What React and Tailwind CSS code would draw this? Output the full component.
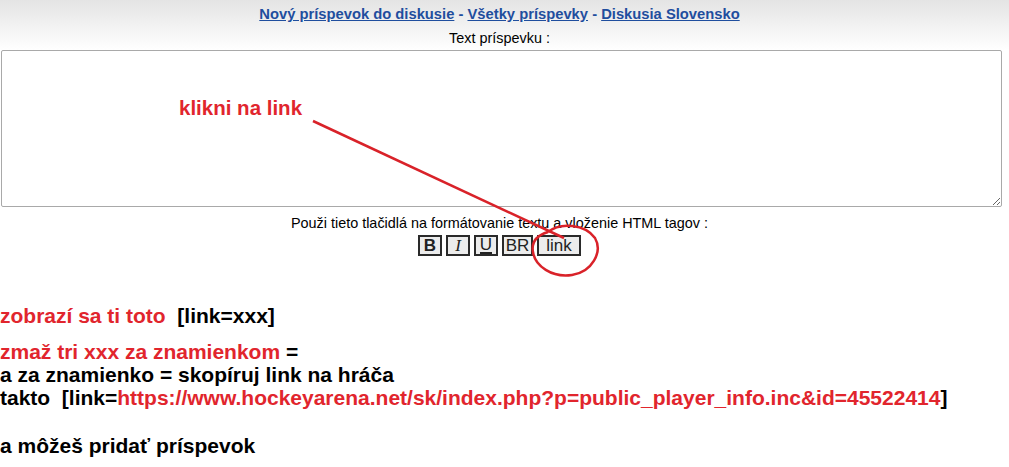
import React from 'react';

const red = 'text-[#e1252d]';

const ToolButton = ({ children, className = '' }) => (
  <span
    className={`inline-flex items-center justify-center h-[21px] border-2 border-[#2a2a2a] bg-[#ececec] text-[17px] leading-none text-[#222] ${className}`}
  >
    {children}
  </span>
);

const App = () => {
  return (
    <div className="relative w-[1009px] h-[467px] overflow-hidden bg-white font-['Liberation_Sans',Arial,sans-serif]">
      {/* Header */}
      <div className="bg-gradient-to-b from-[#e4e4e4] to-white pt-[6px] h-[50px]">
        <div className="w-[999px] text-center text-[14.75px] font-bold text-[#1f4e9e] leading-[16px]">
          <a className="underline" href="#">Nový príspevok do diskusie</a>
          <span> - </span>
          <a className="underline" href="#">Všetky príspevky</a>
          <span> - </span>
          <a className="underline" href="#">Diskusia Slovensko</a>
        </div>
        <div className="w-[999px] text-center text-[14.4px] text-black leading-[16px] mt-[8px]">Text príspevku :</div>
      </div>

      {/* Textarea */}
      <div className="pl-[1px]">
        <textarea
          className="block w-[1001px] h-[157px] border border-[#a9a9a9] rounded-[2px] bg-white outline-none"
          defaultValue=""
        />
      </div>

      {/* Toolbar */}
      <div className="w-[999px] text-center text-[14.4px] text-black leading-[16px] mt-[8px]">
        Použi tieto tlačidlá na formátovanie textu a vloženie HTML tagov :
      </div>
      <div className="w-[999px] flex justify-center gap-[4px] mt-[4px]">
        <ToolButton className="w-[24px] font-bold">B</ToolButton>
        <ToolButton className="w-[24px] italic font-['Liberation_Serif',serif]">I</ToolButton>
        <ToolButton className="w-[24px]"><span className="border-b-2 border-[#222] leading-[14px]">U</span></ToolButton>
        <ToolButton className="w-[31px]">BR</ToolButton>
        <ToolButton className="w-[44px]">link</ToolButton>
      </div>

      {/* Instructions */}
      <div className="mt-[48px] text-[21px] font-bold leading-[23px] text-black">
        <div>
          <span className={red}>zobrazí sa ti toto</span>
          <span className="whitespace-pre">  [link=xxx]</span>
        </div>
        <div className="mt-[13px]">
          <span className={red}>zmaž tri xxx za znamienkom</span> =
        </div>
        <div>a za znamienko = skopíruj link na hráča</div>
        <div className="whitespace-pre">
          takto  [link=<span className={red}>https://www.hockeyarena.net/sk/index.php?p=public_player_info.inc&amp;id=45522414</span>]
        </div>
        <div className="mt-[25px]">a môžeš pridať príspevok</div>
      </div>

      {/* Annotation over the screenshot */}
      <div className={`absolute left-[179px] top-[97px] text-[20.5px] font-bold leading-[22px] ${red}`}>
        klikni na link
      </div>
      <svg className="absolute left-0 top-0 pointer-events-none" width="1009" height="467">
        <line x1="313" y1="121" x2="564" y2="238" stroke="#d92229" strokeWidth="2.5" />
        <path
          d="M548 232 C 560 222, 585 224, 595 238 C 603 252, 592 272, 572 275 C 552 278, 535 266, 533 252 C 531 241, 538 235, 548 232"
          fill="none"
          stroke="#d92229"
          strokeWidth="2.5"
        />
      </svg>
    </div>
  );
};

export default App;
